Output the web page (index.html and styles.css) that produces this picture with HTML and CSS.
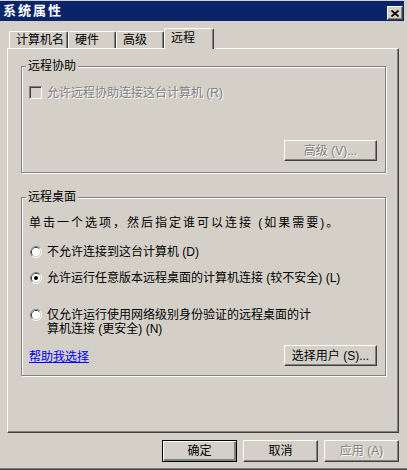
FILE: index.html
```html
<!DOCTYPE html>
<html lang="zh-CN">
<head>
    <meta charset="UTF-8">
    <title>系统属性</title>
    <link rel="stylesheet" href="styles.css">
</head>
<body>
    <div class="window">
        <div class="titlebar">
            <span class="title">系统属性</span>
            <button class="close-btn" title="关闭">
                <svg width="8" height="7" viewBox="0 0 8 7">
                    <path d="M0.5 0.5 L7.5 6.5 M7.5 0.5 L0.5 6.5" stroke="#000" stroke-width="1.7" fill="none"/>
                </svg>
            </button>
        </div>

        <div class="content">
            <div class="tabs">
                <div class="tab tab-name">计算机名</div>
                <div class="tab tab-short">硬件</div>
                <div class="tab tab-short">高级</div>
                <div class="tab tab-remote active">远程</div>
            </div>

            <div class="panel">
                <fieldset class="group group-assist">
                    <legend>远程协助</legend>
                    <label class="option disabled">
                        <span class="checkbox"></span>
                        <span>允许远程协助连接这台计算机 (R)</span>
                    </label>
                    <div class="group-buttons">
                        <button class="btn btn-wide" disabled>高级 (V)...</button>
                    </div>
                </fieldset>

                <fieldset class="group group-desktop">
                    <legend>远程桌面</legend>
                    <p class="hint">单击一个选项，然后指定谁可以连接 (如果需要)。</p>

                    <label class="option opt-deny">
                        <svg class="radio" width="12" height="12" viewBox="0 0 12 12">
                            <path d="M2.11 9.89 A5.5 5.5 0 0 1 9.89 2.11" stroke="#808080" fill="none"/>
                            <path d="M9.89 2.11 A5.5 5.5 0 0 1 2.11 9.89" stroke="#fff" fill="none"/>
                            <path d="M2.82 9.18 A4.5 4.5 0 0 1 9.18 2.82" stroke="#404040" fill="none"/>
                            <path d="M9.18 2.82 A4.5 4.5 0 0 1 2.82 9.18" stroke="#d4d0c8" fill="none"/>
                            <circle cx="6" cy="6" r="4" fill="#fff"/>
                        </svg>
                        <span>不允许连接到这台计算机 (D)</span>
                    </label>

                    <label class="option opt-any">
                        <svg class="radio" width="12" height="12" viewBox="0 0 12 12">
                            <path d="M2.11 9.89 A5.5 5.5 0 0 1 9.89 2.11" stroke="#808080" fill="none"/>
                            <path d="M9.89 2.11 A5.5 5.5 0 0 1 2.11 9.89" stroke="#fff" fill="none"/>
                            <path d="M2.82 9.18 A4.5 4.5 0 0 1 9.18 2.82" stroke="#404040" fill="none"/>
                            <path d="M9.18 2.82 A4.5 4.5 0 0 1 2.82 9.18" stroke="#d4d0c8" fill="none"/>
                            <circle cx="6" cy="6" r="4" fill="#fff"/>
                            <circle cx="6" cy="6" r="2" fill="#000"/>
                        </svg>
                        <span>允许运行任意版本远程桌面的计算机连接 (较不安全) (L)</span>
                    </label>

                    <label class="option opt-nla">
                        <svg class="radio" width="12" height="12" viewBox="0 0 12 12">
                            <path d="M2.11 9.89 A5.5 5.5 0 0 1 9.89 2.11" stroke="#808080" fill="none"/>
                            <path d="M9.89 2.11 A5.5 5.5 0 0 1 2.11 9.89" stroke="#fff" fill="none"/>
                            <path d="M2.82 9.18 A4.5 4.5 0 0 1 9.18 2.82" stroke="#404040" fill="none"/>
                            <path d="M9.18 2.82 A4.5 4.5 0 0 1 2.82 9.18" stroke="#d4d0c8" fill="none"/>
                            <circle cx="6" cy="6" r="4" fill="#fff"/>
                        </svg>
                        <span class="two-line">仅允许运行使用网络级别身份验证的远程桌面的计<br>算机连接 (更安全) (N)</span>
                    </label>

                    <div class="link-row">
                        <a href="#" class="help-link">帮助我选择</a>
                        <button class="btn btn-wide">选择用户 (S)...</button>
                    </div>
                </fieldset>
            </div>

            <div class="actions">
                <button class="btn btn-default">确定</button>
                <button class="btn">取消</button>
                <button class="btn" disabled>应用 (A)</button>
            </div>
        </div>
    </div>
</body>
</html>
```

FILE: styles.css
```css
body {
    margin: 0;
    background-color: #d4d0c8;
    font-family: "Liberation Sans", "Noto Sans CJK SC", sans-serif;
    font-size: 12px;
    color: #000;
}

/* window frame */
.window {
    width: 407px;
    height: 470px;
    box-sizing: border-box;
    border-top: 1px solid #d4d0c8;
    border-bottom: 1px solid #404040;
    box-shadow: inset 0 -1px 0 #808080;
    background-color: #d4d0c8;
}
.titlebar {
    width: 404px;
    height: 20px;
    background-color: #0a246a;
    display: flex;
    align-items: center;
    justify-content: space-between;
    padding: 0 1px 0 3px;
    box-sizing: border-box;
}
.title {
    color: #fff;
    font-weight: bold;
    font-size: 13px;
    line-height: 14px;
    letter-spacing: 2px;
}
.close-btn {
    width: 16px;
    height: 14px;
    padding: 0;
    margin-top: 4px;
    background-color: #d4d0c8;
    border: 1px solid;
    border-color: #fff #404040 #404040 #fff;
    box-shadow: inset -1px -1px 0 #808080;
    display: flex;
    align-items: center;
    justify-content: center;
}
.close-btn svg {
    display: block;
    margin-left: -1px;
}

.content {
    padding: 7px 0 0 7px;
}

/* tab strip */
.tabs {
    display: flex;
    align-items: flex-end;
    height: 20px;
    padding-left: 2px;
}
.tab {
    box-sizing: border-box;
    height: 17px;
    padding: 2px 0 0 6px;
    line-height: 12px;
    border-top: 1px solid #fff;
    border-left: 1px solid #fff;
    border-right: 1px solid #404040;
    box-shadow: inset -1px 0 0 #808080;
    border-radius: 2px 2px 0 0;
    white-space: nowrap;
}
.tab-name {
    width: 59px;
}
.tab-short {
    width: 48px;
}
.tab-remote {
    width: 50px;
}
.tab.active {
    position: relative;
    z-index: 1;
    height: 21px;
    margin-bottom: -1px;
    padding-top: 3px;
    background-color: #d4d0c8;
}

/* tab page */
.panel {
    width: 392px;
    height: 385px;
    box-sizing: border-box;
    border-top: 1px solid #fff;
    border-left: 1px solid #fff;
    border-right: 1px solid #404040;
    border-bottom: 1px solid #404040;
    box-shadow: inset -1px -1px 0 #808080;
    padding: 11px 12px 0 13px;
}

.group {
    margin: 0;
    padding: 0 8px 0 7px;
    min-width: 0;
    border: 1px solid #808080;
    box-shadow: 1px 1px 0 #fff, inset 1px 1px 0 #fff;
}
.group legend {
    padding: 0 2px;
    margin-left: -3px;
    line-height: 12px;
    background-color: #d4d0c8;
}
.group-assist {
    padding-bottom: 11px;
}
.group-desktop {
    margin-top: 18px;
    padding-bottom: 9px;
}

.option {
    display: flex;
    align-items: center;
    gap: 5px;
    line-height: 12px;
    white-space: nowrap;
}
.group-assist .option {
    margin-top: 14px;
    height: 13px;
}
.opt-deny {
    margin-top: 17px;
}
.opt-any {
    margin-top: 14px;
}
.opt-nla {
    margin-top: 24px;
    align-items: flex-start;
}
.opt-nla .radio {
    margin-top: 1px;
}
.two-line {
    line-height: 14px;
}
.radio {
    display: block;
    flex: none;
    margin-left: 1px;
}
.checkbox {
    flex: none;
    width: 13px;
    height: 13px;
    box-sizing: border-box;
    border: 1px solid;
    border-color: #808080 #fff #fff #808080;
    box-shadow: inset 1px 1px 0 #404040, inset -1px -1px 0 #d4d0c8;
    background-color: #d4d0c8;
}
.disabled,
.btn:disabled {
    color: #808080;
    text-shadow: 1px 1px 0 #fff;
}

.hint {
    margin: 14px 0 0;
    line-height: 12px;
    letter-spacing: 2px;
    white-space: nowrap;
}

.group-buttons {
    display: flex;
    justify-content: flex-end;
    margin-top: 41px;
}
.link-row {
    display: flex;
    justify-content: space-between;
    align-items: center;
    margin-top: 9px;
}
.help-link {
    color: #0000ff;
    text-decoration: underline;
    line-height: 12px;
    margin-top: 3px;
}

/* push buttons */
.btn {
    font-family: inherit;
    font-size: 12px;
    color: #000;
    width: 75px;
    height: 22px;
    padding: 0;
    background-color: #d4d0c8;
    border: 1px solid;
    border-color: #fff #404040 #404040 #fff;
    box-shadow: inset -1px -1px 0 #808080;
    line-height: 12px;
}
.btn-wide {
    width: 93px;
    height: 21px;
}
.btn-default {
    border-color: #000;
    box-shadow: inset 1px 1px 0 #fff, inset -2px -2px 0 #808080, inset -1px -1px 0 #404040;
}

.actions {
    display: flex;
    justify-content: flex-end;
    gap: 6px;
    width: 392px;
    margin-top: 7px;
}
```
